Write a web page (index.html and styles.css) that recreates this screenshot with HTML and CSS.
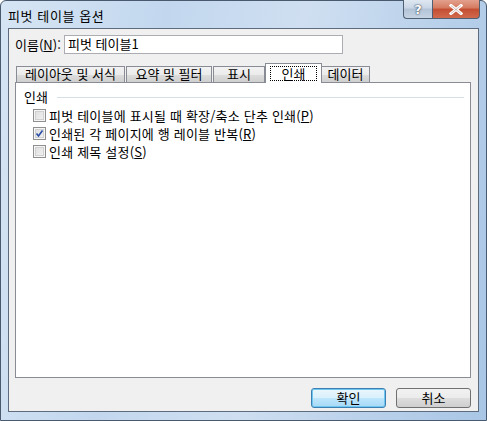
FILE: index.html
```html
<!DOCTYPE html>
<html lang="ko">
<head>
<meta charset="utf-8">
<link rel="stylesheet" href="styles.css">
</head>
<body>
<div class="window">
  <div class="titlebar">
    <span class="title">피벗 테이블 옵션</span>
    <div class="caption">
      <div class="cbtn help"><span>?</span></div>
      <div class="cbtn close"><svg width="14" height="11" viewBox="0 0 14 11"><path d="M2 1.5 L12 9.5 M12 1.5 L2 9.5" stroke="#fff" stroke-width="3" stroke-linecap="square"/><path d="M2 1.5 L12 9.5 M12 1.5 L2 9.5" stroke="#5a2a20" stroke-width="0.6" fill="none" opacity="0.5"/></svg></div>
    </div>
  </div>
  <div class="client">
    <div class="namerow">
      <span class="label">이름(<u>N</u>):</span>
      <div class="input">피벗 테이블1</div>
    </div>
    <div class="tabs">
      <div class="tab">레이아웃 및 서식</div>
      <div class="tab">요약 및 필터</div>
      <div class="tab t3">표시</div>
      <div class="tab active"><span class="focus">인쇄</span></div>
      <div class="tab">데이터</div>
    </div>
    <div class="panel">
      <div class="group">
        <span class="gtitle">인쇄</span>
        <span class="gline"></span>
      </div>
      <div class="check"><span class="box"></span><span>피벗 테이블에 표시될 때 확장/축소 단추 인쇄(<u>P</u>)</span></div>
      <div class="check"><span class="box checked"><svg width="9" height="9" viewBox="0 0 9 9"><path d="M1.5 4.5 L3.5 7 L7.5 1.5" stroke="#2a4ea8" stroke-width="1.6" fill="none"/></svg></span><span>인쇄된 각 페이지에 행 레이블 반복(<u>R</u>)</span></div>
      <div class="check"><span class="box"></span><span>인쇄 제목 설정(<u>S</u>)</span></div>
    </div>
    <div class="buttons">
      <div class="btn default">확인</div>
      <div class="btn">취소</div>
    </div>
  </div>
</div>
</body>
</html>
```

FILE: styles.css
```css
html, body {
  margin: 0;
  padding: 0;
  background: #ffffff;
}
body {
  font-family: "Noto Sans CJK KR", "Noto Sans", sans-serif;
  font-size: 13px;
  color: #000;
}
.window {
  width: 487px;
  height: 421px;
  box-sizing: border-box;
  border: 1px solid #4a5a6e;
  border-radius: 6px 6px 0 0;
  background: linear-gradient(100deg, #d6e5f4 0%, #c2d7ee 30%, #cfdff1 55%, #b8d0ea 80%, #a9c6e6 100%);
  display: flex;
  flex-direction: column;
  position: relative;
}
.titlebar {
  height: 27px;
  position: relative;
  display: flex;
  align-items: center;
  padding-left: 7px;
}
.title {
  font-size: 13px;
  letter-spacing: 0.6px;
  color: #000;
  margin-top: 1px;
}
.caption {
  position: absolute;
  right: 6px;
  top: -1px;
  display: flex;
}
.cbtn {
  height: 19px;
  box-sizing: border-box;
  border: 1px solid #4f5f74;
  border-top: none;
  display: flex;
  align-items: center;
  justify-content: center;
}
.help {
  width: 29px;
  border-radius: 0 0 0 4px;
  border-right: none;
  background: linear-gradient(#dfe8f2 0%, #c9d6e5 45%, #b3c3d6 50%, #c6d4e4 100%);
  color: #fff;
  font-weight: bold;
  font-family: "DejaVu Sans", sans-serif;
  font-size: 13px;
  text-shadow: 0 0 2px #2d3c52, 0 0 1px #2d3c52;
}
.close {
  width: 48px;
  border-radius: 0 0 4px 0;
  background: linear-gradient(#e3a08d 0%, #d47a60 45%, #c44d31 50%, #d06a4e 100%);
}
.client {
  flex: 1;
  margin: 0 7px 8px 7px;
  border: 1px solid #5d6b7c;
  background: #f0f0f0;
  display: flex;
  flex-direction: column;
  padding: 6px 7px 0 6px;
}
.namerow {
  display: flex;
  align-items: center;
  height: 19px;
}
.label {
  width: 49px;
}
.input {
  width: 279px;
  height: 19px;
  box-sizing: border-box;
  border: 1px solid #abadb3;
  background: #fff;
  padding-left: 3px;
  line-height: 16px;
}
.tabs {
  display: flex;
  align-items: flex-end;
  margin-top: 9px;
  padding-left: 1px;
  height: 19px;
  position: relative;
  z-index: 1;
}
.tab {
  height: 16px;
  box-sizing: border-box;
  border: 1px solid #898c95;
  border-bottom: none;
  background: linear-gradient(#f2f2f2 0%, #ebebeb 50%, #dddddd 51%, #cfcfcf 100%);
  padding: 0 4px;
  line-height: 14px;
  margin-right: 1px;
  white-space: nowrap;
  text-align: center;
}
.tab:nth-child(1) { width: 109px; }
.tab:nth-child(2) { width: 86px; }
.tab:nth-child(3) { width: 52px; margin-right: 0; }
.tab.active {
  width: 57px;
  height: 20px;
  background: #fff;
  margin: 0 -1px 0 0;
  padding: 2px 4px 0;
  position: relative;
  top: 1px;
  z-index: 2;
}
.tab:nth-child(5) { width: 49px; }
.focus {
  display: block;
  border: 1px dotted #000;
  line-height: 13px;
  height: 15px;
  box-sizing: border-box;
}
.panel {
  height: 296px;
  box-sizing: border-box;
  border: 1px solid #898c95;
  background: #fff;
  padding: 6px 0 0 8px;
}
.group {
  display: flex;
  align-items: center;
  height: 14px;
}
.gtitle {
  margin-right: 9px;
}
.gline {
  flex: 1;
  height: 1px;
  background: #d5dfe5;
  margin-right: 6px;
  margin-top: 2px;
}
.check {
  display: flex;
  align-items: center;
  height: 18px;
  margin-left: 9px;
  letter-spacing: 0.2px;
}
.check:nth-of-type(2) { margin-top: 3px; }
.box {
  width: 13px;
  height: 13px;
  box-sizing: border-box;
  border: 1px solid #8e8f8f;
  background: linear-gradient(135deg, #dcdcdc 0%, #f4f4f4 100%);
  box-shadow: inset 0 0 0 1px #f6f6f6, inset 0 0 0 2px #d0d0d0;
  margin-right: 3px;
  display: flex;
  align-items: center;
  justify-content: center;
}
.buttons {
  display: flex;
  justify-content: flex-end;
  gap: 10px;
  margin-top: 10px;
  padding-right: 0;
}
.btn {
  width: 75px;
  height: 20px;
  box-sizing: border-box;
  border: 1px solid #707070;
  border-radius: 3px;
  background: linear-gradient(#f2f2f2 0%, #ebebeb 50%, #dddddd 51%, #cfcfcf 100%);
  text-align: center;
  line-height: 17px;
}
.btn.default {
  border-color: #3c7fb1;
  box-shadow: inset 0 0 0 1px #6fc6f0;
  background: linear-gradient(#eaf6fd 0%, #d9f0fc 50%, #bee6fd 51%, #a7d9f5 100%);
}
```
